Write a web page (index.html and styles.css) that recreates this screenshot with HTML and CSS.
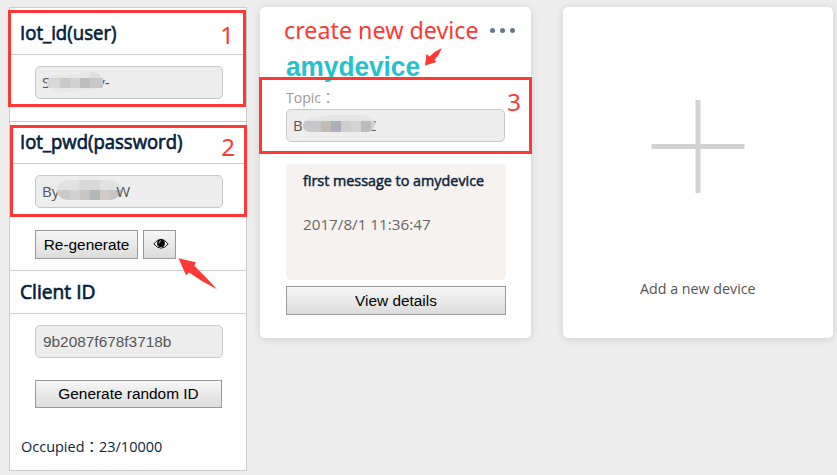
FILE: index.html
```html
<!DOCTYPE html>
<html lang="en">
<head>
<meta charset="utf-8">
<title>Devices</title>
<link rel="stylesheet" href="styles.css">
</head>
<body>
<div class="page">
  <aside class="sidebar">
    <section class="group group-id">
      <h2><span class="fit t-id">Iot_id(user)</span></h2>
      <div class="body">
        <div class="field"><span>S</span><svg class="mosaic" width="56" height="22" viewBox="0 0 56 22"><defs><clipPath id="m1"><path d="M0 12Q1 5 8 3L20 4L32 1H36L46 0Q57 2 57 12Q56 17 50 17L12 21Q2 18 0 12Z"/></clipPath></defs><g clip-path="url(#m1)"><path fill="#e7e7e7" d="M0 0h56v22H0z"/><path fill="#d8d8d8" d="M0 6h13v10H0z"/><path fill="#c9c9c9" d="M13 6h10v10H13z"/><path fill="#d2d2d2" d="M23 6h10v10H23z"/><path fill="#bebebe" d="M33 6h10v10H33z"/><path fill="#c8c8c8" d="M43 6h14v10H43z"/><path fill="#dedede" d="M43 0h10v6H43z"/></g></svg><span>v-</span></div>
      </div>
    </section>
    <section class="group group-pwd">
      <h2><span class="fit t-pwd">Iot_pwd(password)</span></h2>
      <div class="body">
        <div class="field"><span>By</span><svg class="mosaic second" width="64" height="20" viewBox="0 0 64 20"><defs><clipPath id="m2"><rect width="64" height="20" rx="11"/></clipPath></defs><g clip-path="url(#m2)"><path fill="#e1e1e1" d="M0 0h64v20H0z"/><path fill="#d9d9d9" d="M22 0h11v10H22zM33 0h10v10H33z"/><path fill="#cbcac9" d="M0 10h13v10H0z"/><path fill="#d1d3d3" d="M13 10h10v10H13z"/><path fill="#c8c6c4" d="M23 10h10v10H23z"/><path fill="#b3b7b7" d="M33 10h10v10H33z"/><path fill="#d0cbc8" d="M43 10h10v10H43z"/><path fill="#c4c4c4" d="M53 10h11v10H53z"/></g></svg><span>W</span></div>
        <div class="actions">
          <button class="btn regen" type="button">Re-generate</button>
          <button class="btn eye" type="button" aria-label="Show"><svg width="16" height="12" viewBox="0 0 16 12"><path d="M.8 6Q8-3.400 15.200 6Q8 14.400 .8 6Z" fill="#fff" stroke="#111" stroke-width="1"/><circle cx="8" cy="5.200" r="3.900" fill="#000"/><path d="M6 5.300Q6 3 8 2.700" fill="none" stroke="#ccc" stroke-width=".9"/></svg></button>
        </div>
      </div>
    </section>
    <section class="group group-client">
      <h2><span class="fit t-client">Client ID</span></h2>
      <div class="body">
        <div class="field arial">9b2087f678f3718b</div>
        <button class="btn random" type="button">Generate random ID</button>
        <p class="occupied"><span class="fit t-occ">Occupied<span class="colon">：</span>23/10000</span></p>
      </div>
    </section>
  </aside>
  <main class="cards">
    <article class="card device">
      <header><span class="fit note-title">create new device</span><span class="dots"><i></i><i></i><i></i></span></header>
      <h1><span class="fit t-name">amydevice</span></h1>
      <p class="topic"><span class="fit t-topic">Topic<span class="colon">：</span></span></p>
      <div class="field"><span>B</span><svg class="mosaic third" width="72" height="17" viewBox="0 0 72 17"><defs><clipPath id="m3"><path d="M0 10Q1 3 12 3L24 0H62Q72 2 72 10Q70 17 64 17H7Q0 16 0 10Z"/></clipPath></defs><g clip-path="url(#m3)"><path fill="#e4e5e5" d="M0 0h72v17H0z"/><path fill="#c7c7c9" d="M0 6h18v11H0z"/><path fill="#c1bbb5" d="M18 6h10v11H18z"/><path fill="#acafb9" d="M28 6h10v11H28z"/><path fill="#cececf" d="M38 6h10v11H38z"/><path fill="#d4d4d4" d="M48 6h10v11H48z"/><path fill="#bdbaba" d="M58 6h10v11H58z"/><path fill="#d2d2d2" d="M68 6h4v11H68z"/></g></svg><span>Z</span></div>
      <div class="message">
        <p class="subject"><span class="fit t-msg">first message to amydevice</span></p>
        <p class="date"><span class="fit t-date">2017/8/1 11:36:47</span></p>
      </div>
      <button class="btn details" type="button">View details</button>
    </article>
    <article class="card add">
      <svg width="94" height="94" viewBox="0 0 94 94"><path d="M44.500 0h5v93h-5zM.500 44h93v5H.500z" fill="#d2d2d2"/></svg>
      <p><span class="fit t-add">Add a new device</span></p>
    </article>
  </main>
  <div class="mark mark-1"><span>1</span></div>
  <div class="mark mark-2"><span>2</span></div>
  <div class="mark mark-3"><span>3</span></div>
  <svg class="arrow arrow-eye" width="40" height="33" viewBox="0 0 40 33"><path d="M.5 .3L17.700 4.300L16.300 7.700Q28 19 39 31.300Q24 24 11 14.500L8 17.200Z" fill="#fd3936"/></svg>
  <svg class="arrow arrow-name" width="18" height="18" viewBox="0 0 18 18"><path d="M17 0Q14 7 9.500 12L11.500 14L0 17.500L1.500 6L4.500 8.500Q10 3 17 0Z" fill="#fd3936"/></svg>
</div>
</body>
</html>
```
FILE: styles.css
```css
* { box-sizing: border-box; }
body { margin: 0; background: #ededed; color: #0b2540; font: 15px/20px "Open Sans", "Noto Sans CJK TC", sans-serif; }
h1, h2, p { margin: 0; }
.page { position: relative; display: flex; align-items: flex-start; gap: 13px; width: 837px; height: 475px; padding: 7px 0 0 9px; overflow: hidden; }
.sidebar { width: 238px; height: 464px; border: 1px solid #ccc; background: #fff; }
.group + .group { border-top: 1px solid #ccc; }
.group-id { height: 113px; }
.group-pwd { height: 149px; }
.group h2 { display: flex; align-items: center; height: 42px; padding: 0 0 1px 10px; border-bottom: 1px solid #ccc; font-size: 20px; font-weight: 500; color: #04213f; -webkit-text-stroke: .7px #04213f; }
.group-id h2 { height: 47px; padding-top: 4px; }
.group-client h2 { height: 43px; }
.body { padding: 11px 23px 0 25px; }
.field { display: flex; align-items: center; width: 188px; height: 33px; padding: 0 7px 2px; border: 1px solid #c8c8c8; border-radius: 5px; background: #ededed; color: #555; font-size: 15px; overflow: hidden; }
.field > span:first-child { margin-left: -1px; }
.arial { padding: 0 7px; font-family: "Liberation Sans", Arial, sans-serif; font-size: 15.4px; }
.mosaic { flex: none; margin: 0 -4px 0 -3px; }
.group-id .mosaic { position: relative; z-index: 1; margin: 2px -6px 0 -3px; }
.mosaic.second { margin: -1px -5px 0 -2px; }
.mosaic.third { margin: 0 -7px 2px 0; position: relative; z-index: 1; }
.actions { display: flex; gap: 5px; margin-top: 22px; }
.btn { display: flex; align-items: center; justify-content: center; height: 29px; padding: 0; border: 1px solid #999; border-radius: 0; background: linear-gradient(#f6f6f6, #dcdcdc); color: #000; font: 15.4px/20px "Liberation Sans", Arial, sans-serif; }
.regen { width: 103px; }
.eye { width: 33px; padding: 0 0 2px 3px; }
.random { width: 187px; height: 28px; margin-top: 22px; }
.occupied { margin: 28px 0 0 -14px; }
.fit { display: inline-block; white-space: nowrap; transform-origin: 0 50%; }
.colon { font-family: "Noto Sans CJK TC", sans-serif; line-height: 1; }
.t-id { transform: scaleX(.93); }
.t-pwd { transform: scaleX(.925); }
.t-client { transform: scaleX(.96); }
.t-occ { transform: scaleX(.965); }
.t-msg { transform: scaleX(.957); }
.t-add { transform: scaleX(.95); transform-origin: 50% 50%; }
.t-name { transform: scaleX(.97); }
.note-title { transform: scaleX(.97); }
.t-date { transform: scaleX(1.015); }
.cards { display: flex; gap: 32px; }
.card { width: 271px; height: 331px; border-radius: 5px; background: #fff; box-shadow: 0 1px 9px rgba(0, 0, 0, .13); }
.device { padding: 0 25px 0 26px; }
.device header { display: flex; align-items: center; height: 46px; margin: 0 -10px 0 -2px; font: 24px/28px "Noto Sans", sans-serif; color: #fd3936; }
.note-title { width: 206px; }
.dots { display: flex; gap: 5px; }
.dots i { width: 5px; height: 5px; border-radius: 50%; background: #64798b; }
.device h1 { height: 31px; font: bold 27px/29px "Liberation Sans", Arial, sans-serif; color: #26c1cd; }
.topic { height: 25px; padding-top: 4px; color: #999; font-size: 14px; }
.device .field { width: 219px; }
.message { width: 220px; height: 116px; margin: 22px 0 6px; padding: 6px 17px; border-radius: 5px; background: #f6f2ef; }
.subject { font-weight: 500; -webkit-text-stroke: .5px #0b2540; }
.date { margin-top: 24px; color: #666; }
.details { width: 220px; }
.add { width: 270px; display: flex; flex-direction: column; align-items: center; padding-top: 93px; color: #555; }
.add p { margin-top: 84px; }
.mark { position: absolute; border: 3px solid #fd3936; color: #fd3936; font: 24px/28px "Noto Sans", sans-serif; text-align: right; }
.mark-1 { left: 8px; top: 10px; width: 238px; height: 97px; padding: 8px 9px; }
.mark-2 { left: 10px; top: 125px; width: 237px; height: 92px; padding: 5px 9px; }
.mark-3 { left: 259px; top: 77px; width: 273px; height: 77px; padding: 8px 8px; }
.arrow { position: absolute; }
.arrow-eye { left: 178px; top: 258px; }
.arrow-name { left: 425px; top: 48px; }
```
